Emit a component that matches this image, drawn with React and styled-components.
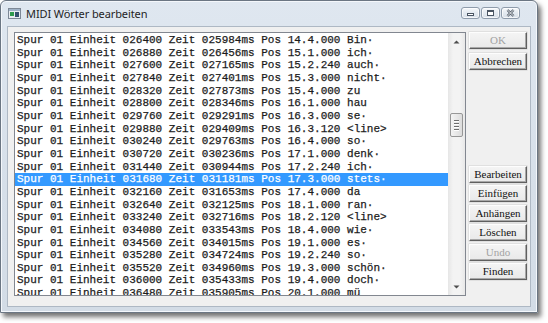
import React from "react";
import styled, { createGlobalStyle } from "styled-components";

const Global = createGlobalStyle`
  html, body { margin: 0; padding: 0; background: #ffffff; }
  #root { width: 548px; height: 323px; overflow: hidden; }
`;

const Window = styled.div`
  box-sizing: border-box;
  width: 538px;
  height: 313px;
  border: 1px solid #6b7683;
  border-radius: 6px 6px 0 0;
  background: linear-gradient(#dfe7f0, #d6dfe9 60%, #d3dce6);
  box-shadow: 3px 4px 5px rgba(0, 0, 0, 0.55), inset 0 0 0 1px #f4f7fb;
  display: flex;
  flex-direction: column;
  padding: 0 7px 7px 7px;
`;

const TitleBar = styled.div`
  height: 25px;
  flex: none;
  display: flex;
  align-items: center;
  gap: 5px;
  padding-left: 0;
`;

const TitleText = styled.span`
  font-family: "Noto Sans", "Open Sans", sans-serif;
  font-size: 11px;
  color: #1f1f1f;
  flex: 1;
  letter-spacing: -0.1px;
`;

const CaptionGroup = styled.div`
  display: flex;
  gap: 1px;
  margin-right: 10px;
  margin-top: -2px;
`;

const CaptionButton = styled.div`
  width: 19px;
  height: 12px;
  box-sizing: border-box;
  border: 1px solid #8e9bab;
  border-radius: 3px;
  background: linear-gradient(#f6f8fb, #e3e9f0 50%, #d8e0e9);
  display: flex;
  align-items: center;
  justify-content: center;
  box-shadow: inset 0 0 0 1px rgba(255, 255, 255, 0.7);
`;

const Client = styled.div`
  flex: 1;
  background: #f0f0f0;
  display: flex;
  gap: 3px;
  padding: 5px 3px 10px 6px;
  box-sizing: border-box;
  border: 1px solid #aeb8c4;
  margin-left: -1px;
  margin-right: -1px;
`;

const ListBox = styled.div`
  box-sizing: border-box;
  width: 452px;
  height: 264px;
  border: 1px solid #828790;
  background: #ffffff;
  display: flex;
`;

const Rows = styled.div`
  flex: 1;
  overflow: hidden;
  padding-top: 1px;
`;

const Row = styled.div`
  height: 12.67px;
  line-height: 12.67px;
  padding-left: 2px;
  white-space: pre;
  font-family: "Liberation Mono", "Courier New", monospace;
  font-size: 11px;
  color: ${(p) => (p.$selected ? "#ffffff" : "#1c1c1c")};
  background: ${(p) => (p.$selected ? "#3399ff" : "transparent")};
  -webkit-text-stroke: ${(p) => (p.$selected ? "0.25px #ffffff" : "0.25px #1c1c1c")};
`;

const ScrollBar = styled.div`
  width: 17px;
  flex: none;
  display: flex;
  flex-direction: column;
  background: linear-gradient(90deg, #e6e6e6, #f3f3f3 30%, #f3f3f3 70%, #e8e8e8);
`;

const Arrow = styled.div`
  height: 17px;
  flex: none;
  display: flex;
  align-items: center;
  justify-content: center;
`;

const Track = styled.div`
  flex: 1;
  padding-top: ${(p) => p.$offset}px;
  display: flex;
  flex-direction: column;
  align-items: center;
`;

const Thumb = styled.div`
  box-sizing: border-box;
  width: 13px;
  height: 24px;
  border: 1px solid #979797;
  border-radius: 2px;
  background: linear-gradient(90deg, #f4f4f4, #e8e8e8 50%, #dcdcdc);
  display: flex;
  flex-direction: column;
  align-items: center;
  justify-content: center;
  gap: 1px;
`;

const Grip = styled.div`
  width: 5px;
  height: 1px;
  background: #6f6f6f;
  box-shadow: 0 1px 0 #ffffff;
  margin-bottom: 1px;
`;

const ButtonColumn = styled.div`
  width: 58px;
  display: flex;
  flex-direction: column;
`;

const ButtonGroup = styled.div`
  display: flex;
  flex-direction: column;
  gap: ${(p) => p.$gap}px;
  margin-top: ${(p) => p.$top || 0}px;
`;

const Button = styled.div`
  box-sizing: border-box;
  height: 17px;
  width: 58px;
  display: flex;
  align-items: center;
  justify-content: center;
  font-family: "Liberation Serif", "Times New Roman", serif;
  font-size: 11px;
  color: ${(p) => (p.$disabled ? "#a3a3a3" : "#111111")};
  background: linear-gradient(#f4f4f4, #e9e9e9);
  border-top: 1px solid #fdfdfd;
  border-left: 1px solid #fdfdfd;
  border-right: 1px solid #5f5f5f;
  border-bottom: 1px solid #5f5f5f;
  box-shadow: inset -1px -1px 0 #a8a8a8, 0 0 0 0.5px #d0d0d0;
  padding-bottom: 1px;
`;

const AppIcon = () => (
  <svg width="13" height="11" viewBox="0 0 13 11" style={{ flex: "none" }}>
    <rect x="0.5" y="0.5" width="12" height="10" fill="#e9edf2" stroke="#7d8896" />
    <rect x="1" y="1" width="11" height="2" fill="#9fb2c7" />
    <rect x="2" y="4" width="4" height="4" fill="#2e9a4e" />
    <rect x="7" y="4" width="4" height="5" fill="#34506e" />
  </svg>
);

const MinGlyph = () => (
  <svg width="9" height="8" viewBox="0 0 9 8">
    <rect x="1.5" y="4.5" width="6" height="2" fill="#ffffff" stroke="#4a5563" />
  </svg>
);
const MaxGlyph = () => (
  <svg width="9" height="8" viewBox="0 0 9 8">
    <rect x="1.5" y="1.5" width="6" height="5" fill="#ffffff" stroke="#4a5563" />
    <rect x="2" y="2" width="5" height="1" fill="#4a5563" />
  </svg>
);
const CloseGlyph = () => (
  <svg width="9" height="8" viewBox="0 0 9 8">
    <path d="M1.5 1 L7.5 7 M7.5 1 L1.5 7" stroke="#4a5563" strokeWidth="2.4" />
    <path d="M1.5 1 L7.5 7 M7.5 1 L1.5 7" stroke="#ffffff" strokeWidth="0.9" />
  </svg>
);

const UpArrow = () => (
  <svg width="7" height="4" viewBox="0 0 7 4">
    <path d="M0.5 3.5 L3.5 0.5 L6.5 3.5 Z" fill="#4d4d4d" />
  </svg>
);
const DownArrow = () => (
  <svg width="7" height="4" viewBox="0 0 7 4">
    <path d="M0.5 0.5 L3.5 3.5 L6.5 0.5 Z" fill="#4d4d4d" />
  </svg>
);

const entries = [
  ["026400", "025984", "14.4.000", "Bin·"],
  ["026880", "026456", "15.1.000", "ich·"],
  ["027600", "027165", "15.2.240", "auch·"],
  ["027840", "027401", "15.3.000", "nicht·"],
  ["028320", "027873", "15.4.000", "zu"],
  ["028800", "028346", "16.1.000", "hau"],
  ["029760", "029291", "16.3.000", "se·"],
  ["029880", "029409", "16.3.120", "<line>"],
  ["030240", "029763", "16.4.000", "so·"],
  ["030720", "030236", "17.1.000", "denk·"],
  ["031440", "030944", "17.2.240", "ich·"],
  ["031680", "031181", "17.3.000", "stets·"],
  ["032160", "031653", "17.4.000", "da"],
  ["032640", "032125", "18.1.000", "ran·"],
  ["033240", "032716", "18.2.120", "<line>"],
  ["034080", "033543", "18.4.000", "wie·"],
  ["034560", "034015", "19.1.000", "es·"],
  ["035280", "034724", "19.2.240", "so·"],
  ["035520", "034960", "19.3.000", "schön·"],
  ["036000", "035433", "19.4.000", "doch·"],
  ["036480", "035905", "20.1.000", "mü"],
];

const SELECTED = 11;

export default function App() {
  return (
    <>
      <Global />
      <Window>
        <TitleBar>
          <AppIcon />
          <TitleText>MIDI Wörter bearbeiten</TitleText>
          <CaptionGroup>
            <CaptionButton><MinGlyph /></CaptionButton>
            <CaptionButton><MaxGlyph /></CaptionButton>
            <CaptionButton><CloseGlyph /></CaptionButton>
          </CaptionGroup>
        </TitleBar>
        <Client>
          <ListBox>
            <Rows>
              {entries.map(([e, z, p, w], i) => (
                <Row key={e} $selected={i === SELECTED}>
                  {`Spur 01 Einheit ${e} Zeit ${z}ms Pos ${p} ${w}`}
                </Row>
              ))}
            </Rows>
            <ScrollBar>
              <Arrow><UpArrow /></Arrow>
              <Track $offset={63}>
                <Thumb>
                  <Grip />
                  <Grip />
                  <Grip />
                  <Grip />
                </Thumb>
              </Track>
              <Arrow><DownArrow /></Arrow>
            </ScrollBar>
          </ListBox>
          <ButtonColumn>
            <ButtonGroup $gap={4}>
              <Button $disabled>OK</Button>
              <Button>Abbrechen</Button>
            </ButtonGroup>
            <ButtonGroup $gap={2.4} $top={96}>
              <Button>Bearbeiten</Button>
              <Button>Einfügen</Button>
              <Button>Anhängen</Button>
              <Button>Löschen</Button>
              <Button $disabled>Undo</Button>
              <Button>Finden</Button>
            </ButtonGroup>
          </ButtonColumn>
        </Client>
      </Window>
    </>
  );
}
